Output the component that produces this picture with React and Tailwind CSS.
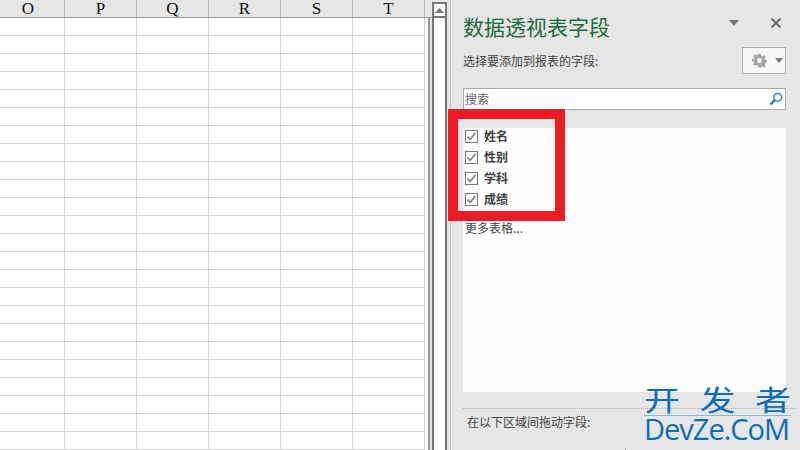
const COLUMNS = ["O", "P", "Q", "R", "S", "T"];
const FIELDS = ["姓名", "性别", "学科", "成绩"];
const CELLS = Array.from({ length: 144 });

function HeaderRow() {
  return (
    <div className="h-[18px] flex bg-[#e6e6e6] border-b border-[#9f9f9f] font-['Liberation_Serif',serif] text-[17px] leading-[18px] text-[#111111]">
      {COLUMNS.map((c, i) => (
        <div
          key={c}
          className={
            i === 0
              ? "w-[65px] pr-[8px] text-center border-r border-[#b8b8b8]"
              : "w-[72px] text-center border-r border-[#b8b8b8]"
          }
        >
          {c}
        </div>
      ))}
    </div>
  );
}

function Sheet() {
  return (
    <div className="w-[432px] flex flex-col">
      <HeaderRow />
      <div className="flex flex-1 min-h-0">
        <div className="w-[428px] bg-white overflow-hidden">
          <div className="grid grid-cols-[65px_repeat(5,72px)] auto-rows-[18px]">
            {CELLS.map((_, i) => (
              <div key={i} className="border-r border-b border-[#d4d4d4]" />
            ))}
          </div>
        </div>
        <div className="w-[2px] bg-[#9a9a9a]" />
      </div>
    </div>
  );
}

function ScrollBar() {
  return (
    <div className="w-[15px] mt-[2px] bg-white border-x-2 border-t-2 border-[#777777]">
      <div className="h-[14px] flex items-center justify-center border-b-2 border-[#777777]">
        <svg width="9" height="5" viewBox="0 0 9 5">
          <path d="M4.5 0 L9 5 L0 5 Z" fill="#777777" />
        </svg>
      </div>
    </div>
  );
}

function CheckBox() {
  return (
    <span className="w-[13px] h-[13px] bg-white border border-[#777777] flex items-center justify-center">
      <svg width="11" height="11" viewBox="0 0 11 11" fill="none">
        <path d="M1.5 5.5 L4.2 8.5 L9.5 1.8" stroke="#808080" strokeWidth="1.7" />
      </svg>
    </span>
  );
}

function FieldPanel() {
  return (
    <div className="flex-1 border-l border-[#c4c4c4] pl-[12px] pr-[14px] flex flex-col text-[12px] text-[#444444]">
      <div className="h-[47px] flex items-start">
        <h2 className="mt-[11px] text-[21px] leading-[30px] text-[#1d6b3f] font-normal">
          数据透视表字段
        </h2>
        <svg className="ml-[119px] mt-[20px]" width="10" height="6" viewBox="0 0 10 6">
          <path d="M0 0 L10 0 L5 6 Z" fill="#777777" />
        </svg>
        <svg className="ml-[31px] mt-[17px]" width="12" height="12" viewBox="0 0 12 12" fill="none">
          <path d="M1.5 1.5 L10.5 10.5 M10.5 1.5 L1.5 10.5" stroke="#666666" strokeWidth="2" />
        </svg>
      </div>

      <div className="h-[27px] flex items-center justify-between">
        <span className="leading-[24px]">选择要添加到报表的字段:</span>
        <div className="w-[44px] h-[27px] bg-[#f8f8f8] border border-[#ababab] flex items-center pl-[9px] gap-[8px]">
          <svg width="15" height="15" viewBox="0 0 24 24" fill="#a6a6a6">
            <path
              fillRule="evenodd"
              d="M10 1h4l.6 3.2 2 .8 2.7-1.8 2.8 2.8-1.8 2.7.8 2 3.2.6v4l-3.2.6-.8 2 1.8 2.7-2.8 2.8-2.7-1.8-2 .8L14 23h-4l-.6-3.2-2-.8-2.7 1.8-2.8-2.8 1.8-2.7-.8-2L0 14v-4l3.2-.6.8-2L2.200 4.700 5 1.900l2.700 1.800 2-.8zM12 8a4 4 0 1 0 0 8 4 4 0 0 0 0-8z"
            />
          </svg>
          <svg width="8" height="5" viewBox="0 0 8 5">
            <path d="M0 0 L8 0 L4 5 Z" fill="#777777" />
          </svg>
        </div>
      </div>

      <div className="mt-[14px] h-[22px] bg-white border border-[#ababab] flex items-center justify-between pl-[1px] pr-[2px]">
        <span className="text-[12px] leading-[18px] text-[#6a6a6a]">搜索</span>
        <svg width="14" height="14" viewBox="0 0 14 14" fill="none">
          <circle cx="8.700" cy="5.300" r="3.900" stroke="#3f7fb8" strokeWidth="1.500" />
          <path d="M5.800 8.200 L1.500 12.500" stroke="#2f75b5" strokeWidth="2.400" />
        </svg>
      </div>

      <div className="mt-[18px] h-[264px] bg-[#fefefe] pt-[2px] pl-[2px]">
        {FIELDS.map((f) => (
          <label key={f} className="h-[21px] flex items-start gap-[6px]">
            <CheckBox />
            <span className="font-semibold leading-[12px] text-[#404040]">{f}</span>
          </label>
        ))}
        <div className="mt-[5px] leading-[18px]">更多表格...</div>
      </div>

      <div className="mt-[16px] border-t border-dotted border-[#b0b0b0] -mr-[10px]" />
      <div className="mt-[4px] pl-[4px] leading-[18px]">在以下区域间拖动字段:</div>
    </div>
  );
}

function Watermark() {
  return (
    <div className="absolute left-[644px] top-[381px] w-[147px] text-[#0f6db5] flex flex-col items-stretch">
      <div className="h-[34px] flex justify-between text-[36px] leading-[34px] font-normal origin-center scale-y-[0.8]">
        <span>开</span>
        <span>发</span>
        <span>者</span>
      </div>
      <div className="border-t border-[#7fbce6]" />
      <div className="font-['Open_Sans',sans-serif] text-[29px] leading-[26px] tracking-[-1px] whitespace-nowrap">
        DevZe.CoM
      </div>
    </div>
  );
}

export default function App() {
  return (
    <div className="relative w-[800px] h-[450px] overflow-hidden bg-[#e6e6e6] flex font-['Noto_Sans_CJK_SC','Noto_Sans',sans-serif]">
      <Sheet />
      <ScrollBar />
      <div className="w-[3px]" />
      <FieldPanel />
      {/* red highlight drawn over the field list */}
      <div className="absolute left-[448px] top-[109px] w-[117px] h-[112px] border-[10px] border-[#ed1c24]" />
      <Watermark />
      <div className="absolute left-[625px] top-[448px] w-px h-[2px] bg-[#aaaaaa]" />
    </div>
  );
}
